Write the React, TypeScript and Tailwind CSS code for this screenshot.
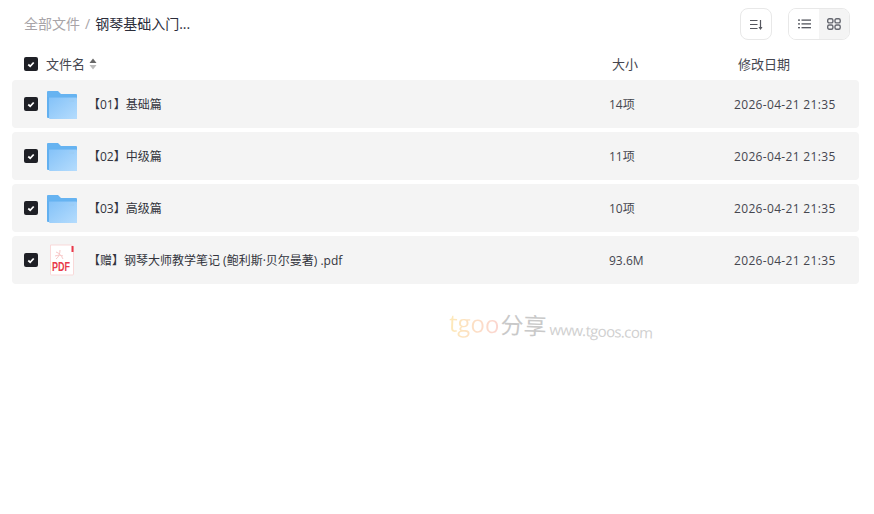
const font = { fontFamily: '"Open Sans","Noto Sans CJK SC",sans-serif' };

function Check() {
  return (
    <span className="flex h-[14px] w-[14px] shrink-0 items-center justify-center rounded-[2px] bg-[#1f2026]">
      <svg width="8" height="7" viewBox="0 0 8 7" fill="none">
        <path d="M1.300 3.500 3.200 5.300 6.700 1.500" stroke="#fff" strokeWidth="1.800" />
      </svg>
    </span>
  );
}

function Folder() {
  return (
    <svg width="30" height="28" viewBox="0 0 30 28" className="mt-[2px]">
      <defs>
        <linearGradient id="fg" x1="0" y1="0" x2="1" y2="1">
          <stop offset="0" stopColor="#84c2f8" />
          <stop offset="1" stopColor="#b5dcfd" />
        </linearGradient>
      </defs>
      <path d="M0 1a1 1 0 0 1 1-1h10l3 3h15a1 1 0 0 1 1 1v4H0z" fill="#66b3f1" />
      <path d="M0 6h29v21H1a1 1 0 0 1-1-1z" fill="#62b0f0" />
      <path d="M2 6.500h27a1 1 0 0 1 1 1V28H3a1 1 0 0 1-1-1z" fill="url(#fg)" />
      <rect x="22" y="8.500" width="5" height="2.500" fill="#9ccdf6" />
    </svg>
  );
}

function Pdf() {
  return (
    <svg width="30" height="32" viewBox="0 0 30 32">
      <path d="M3.500 1H24.500L26.500 3V30a1 1 0 0 1-1 1H4.500a1 1 0 0 1-1-1z" fill="#fff" stroke="#f9d9d9" />
      <rect x="24.500" y="2" width="2" height="6" fill="#e8394a" />
      <path d="M9 8c3 1 5 3 7 7M13 6c0 3-1 7-4 9M8 12c3-1 6-1 8 0" fill="none" stroke="#f8c8c8" strokeWidth="1" />
      <text x="5" y="27" fontSize="12.500" fontWeight="700" fill="#e8394a" fontFamily="Liberation Sans, sans-serif" textLength="18" lengthAdjust="spacingAndGlyphs">PDF</text>
    </svg>
  );
}

const rows = [
  { name: "【01】基础篇", size: "14项", pdf: false },
  { name: "【02】中级篇", size: "11项", pdf: false },
  { name: "【03】高级篇", size: "10项", pdf: false },
  { name: "【赠】钢琴大师教学笔记 (鲍利斯·贝尔曼著) .pdf", size: "93.6M", pdf: true },
];

export default function App() {
  return (
    <div className="relative h-[514px] w-[874px] overflow-hidden bg-white" style={font}>
      <div className="flex h-[48px] items-center pl-[24px] pr-[24px]">
        <span className="pb-[1px] text-[14px] text-[#a8a4a8]">全部文件</span>
        <span className="mx-[5px] pb-[1px] text-[14px] text-[#a8a4a8]">/</span>
        <span className="pb-[1px] text-[14px] text-[#2b2d3a]">钢琴基础入门...</span>
        <div className="ml-auto flex items-center gap-[16px]">
          <button className="flex h-[32px] w-[32px] items-center justify-center rounded-[8px] border border-[#e8e8e8] bg-white">
            <svg width="13" height="11" viewBox="0 0 13 11" fill="none" stroke="#55575f" strokeWidth="1.200">
              <path d="M0 1.500h7.500M0 5.500h7.500M0 9.500h7.500M10.500 1v8.500" />
              <path d="M8.500 8h4l-2 3z" fill="#55575f" stroke="none" />
            </svg>
          </button>
          <div className="flex h-[32px] w-[62px] overflow-hidden rounded-[8px] border border-[#e8e8e8]">
            <span className="flex w-[30px] items-center justify-center bg-white">
              <svg width="13" height="10" viewBox="0 0 13 10" fill="#44464f">
                <rect x="0" y="0.500" width="2" height="1.200" />
                <rect x="3.500" y="0.500" width="9.500" height="1.200" />
                <rect x="0" y="4.300" width="2" height="1.200" />
                <rect x="3.500" y="4.300" width="9.500" height="1.200" />
                <rect x="0" y="8.100" width="2" height="1.200" />
                <rect x="3.500" y="8.100" width="9.500" height="1.200" />
              </svg>
            </span>
            <span className="flex flex-1 items-center justify-center bg-[#f4f4f4]">
              <svg width="14" height="12" viewBox="0 0 14 12" fill="none" stroke="#666870" strokeWidth="1.400">
                <rect x="0.700" y="0.700" width="5.200" height="4.200" rx="1.500" />
                <rect x="8" y="0.700" width="5.200" height="4.200" rx="1.500" />
                <rect x="0.700" y="7" width="5.200" height="4.200" rx="1.500" />
                <rect x="8" y="7" width="5.200" height="4.200" rx="1.500" />
              </svg>
            </span>
          </div>
        </div>
      </div>

      <div className="flex h-[32px] items-center px-[24px] text-[13px] text-[#45464f]">
        <Check />
        <span className="ml-[8px] pt-[1px]">文件名</span>
        <svg className="ml-[4px]" width="8" height="12" viewBox="0 0 8 12">
          <path d="M4 0.500 7.500 5H0.500z" fill="#666" />
          <path d="M4 11.500 7.500 7H0.500z" fill="#bbb" />
        </svg>
        <span className="ml-auto w-[126px] pt-[1px]">大小</span>
        <span className="w-[112px] pt-[1px]">修改日期</span>
      </div>

      <div className="flex w-[859px] flex-col gap-[4px] px-[12px]">
        {rows.map((r) => (
          <div key={r.name} className="flex h-[48px] w-[847px] items-center rounded-[4px] bg-[#f4f4f4] pl-[12px] text-[12px] text-[#45464f]">
            <Check />
            <span className="ml-[8px] flex w-[32px] justify-center">{r.pdf ? <Pdf /> : <Folder />}</span>
            <span className="ml-[10px] flex-1 pt-[2px] text-[#33343d]">{r.name}</span>
            <span className="w-[125px] pt-[2px]">{r.size}</span>
            <span className="w-[125px] whitespace-nowrap pt-[2px] tracking-[0.33px]">2026-04-21 21:35</span>
          </div>
        ))}
      </div>

      <div className="absolute left-[449px] top-[309px] flex rotate-[2deg] items-baseline whitespace-nowrap">
        <span className="bg-gradient-to-r from-[#fde9b8] to-[#fbd5d0] bg-clip-text text-[24px] leading-[34px] text-transparent">tgoo</span>
        <span className="ml-[1px] text-[23px] leading-[34px] text-[#c9c9c9]">分享</span>
        <span className="ml-[3px] text-[15px] leading-[34px] tracking-[-0.65px] text-[#d0d0d0]">www.tgoos.com</span>
      </div>
    </div>
  );
}
